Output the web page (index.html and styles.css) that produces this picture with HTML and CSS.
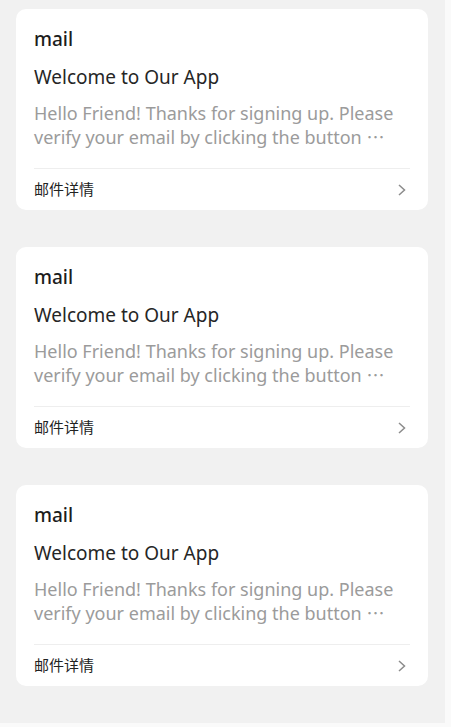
FILE: index.html
```html
<!DOCTYPE html>
<html lang="zh-CN">
<head>
<meta charset="utf-8">
<title>mail</title>
<link rel="stylesheet" href="styles.css">
</head>
<body>
<div class="page">
  <div class="list">
    <div class="card">
      <div class="card-type">mail</div>
      <div class="card-title">Welcome to Our App</div>
      <div class="card-body">Hello Friend! Thanks for signing up. Please verify your email by clicking the button ⋯</div>
      <div class="card-footer">
        <span class="footer-label">邮件详情</span>
        <svg class="chevron" width="12" height="14" viewBox="0 0 12 14"><path d="M3 2 L8.5 7 L3 12" fill="none" stroke="#8c8c8c" stroke-width="1.5"/></svg>
      </div>
    </div>
    <div class="card">
      <div class="card-type">mail</div>
      <div class="card-title">Welcome to Our App</div>
      <div class="card-body">Hello Friend! Thanks for signing up. Please verify your email by clicking the button ⋯</div>
      <div class="card-footer">
        <span class="footer-label">邮件详情</span>
        <svg class="chevron" width="12" height="14" viewBox="0 0 12 14"><path d="M3 2 L8.5 7 L3 12" fill="none" stroke="#8c8c8c" stroke-width="1.5"/></svg>
      </div>
    </div>
    <div class="card">
      <div class="card-type">mail</div>
      <div class="card-title">Welcome to Our App</div>
      <div class="card-body">Hello Friend! Thanks for signing up. Please verify your email by clicking the button ⋯</div>
      <div class="card-footer">
        <span class="footer-label">邮件详情</span>
        <svg class="chevron" width="12" height="14" viewBox="0 0 12 14"><path d="M3 2 L8.5 7 L3 12" fill="none" stroke="#8c8c8c" stroke-width="1.5"/></svg>
      </div>
    </div>
  </div>
</div>
</body>
</html>
```
FILE: styles.css
```css
html, body {
  margin: 0;
  padding: 0;
  background: #fafafa;
}
body {
  font-family: "Noto Sans", "Noto Sans CJK SC", sans-serif;
  color: #222;
}
.page {
  width: 445px;
  height: 723px;
  background: #f1f1f1;
  box-sizing: border-box;
  padding: 9px 17px 0 16px;
  overflow: hidden;
}
.list {
  display: flex;
  flex-direction: column;
  gap: 37px;
}
.card {
  background: #fff;
  border-radius: 10px;
  padding: 14px 18px 0 18px;
  height: 201px;
  box-sizing: border-box;
  display: flex;
  flex-direction: column;
}
.card-type {
  font-size: 19px;
  font-weight: 500;
  line-height: 32px;
  color: #1c1c1c;
}
.card-title {
  font-size: 19px;
  line-height: 28px;
  margin-top: 8px;
  color: #262626;
}
.card-body {
  font-size: 18px;
  line-height: 24px;
  color: #9b9b9b;
  margin-top: 10px;
}
.card-footer {
  margin-top: auto;
  height: 41px;
  border-top: 1px solid #eeeeee;
  display: flex;
  align-items: center;
  justify-content: space-between;
}
.footer-label {
  font-family: "Noto Sans CJK SC", sans-serif;
  font-size: 15px;
  line-height: 20px;
  color: #222;
  margin-bottom: 2px;
}
.chevron {
  margin-right: 2px;
}
```
